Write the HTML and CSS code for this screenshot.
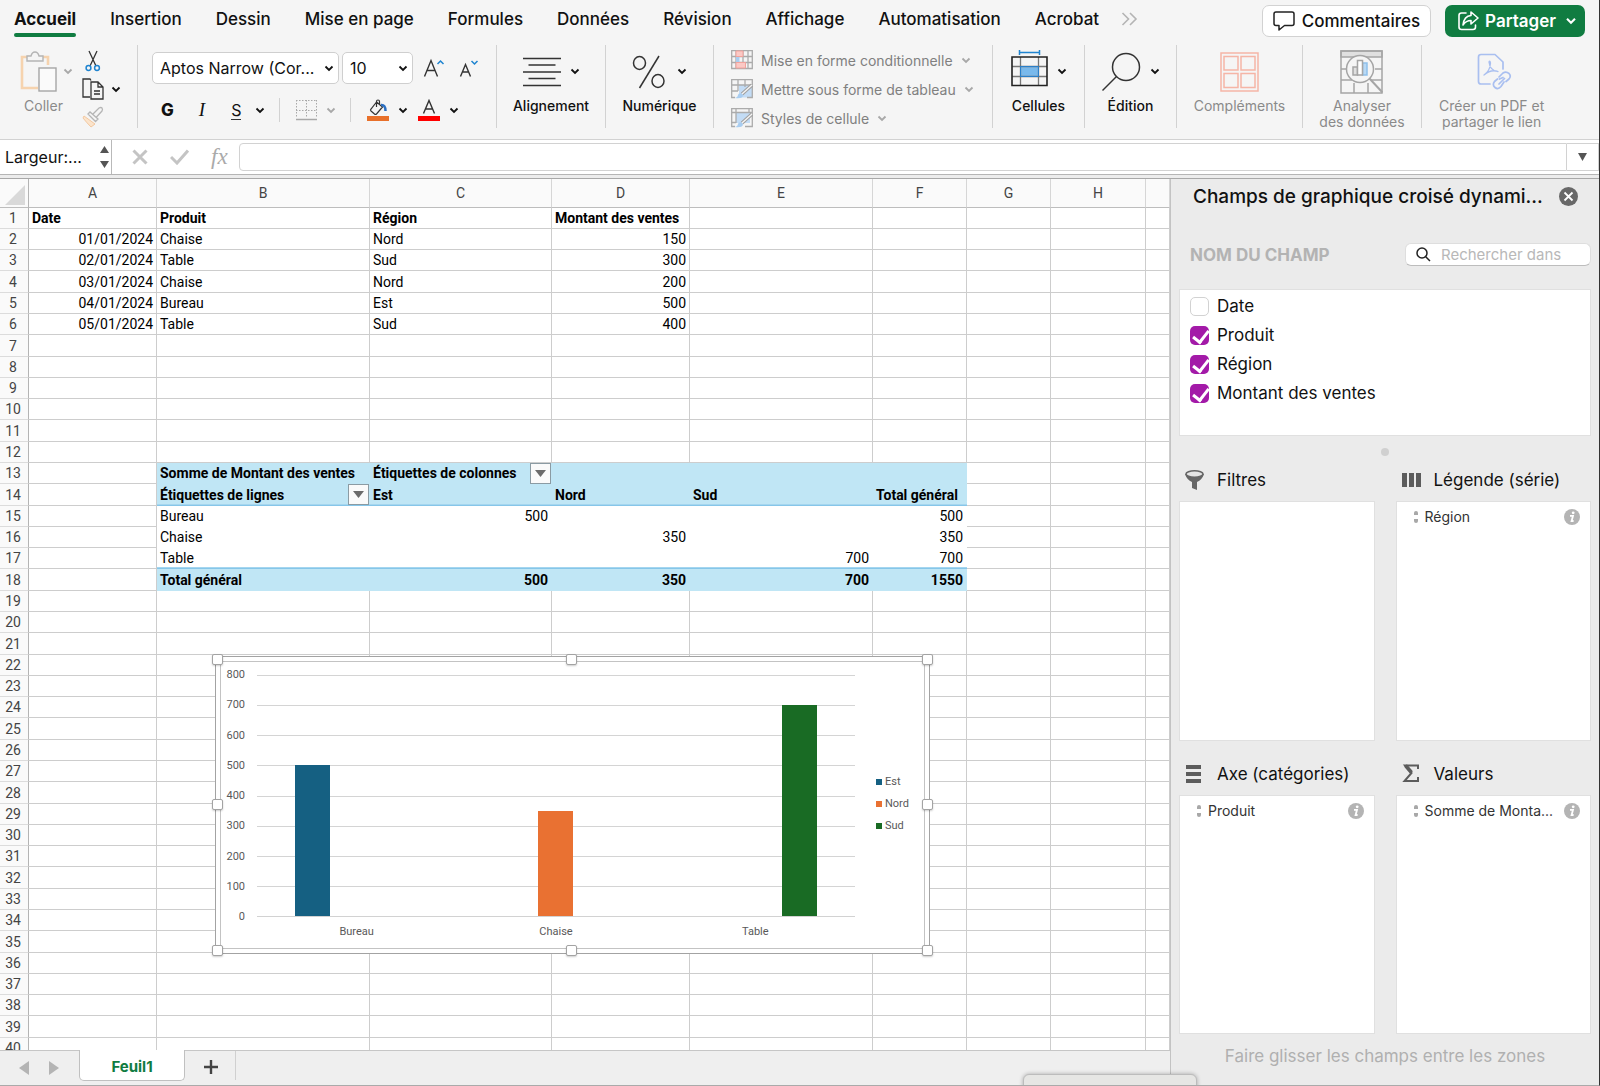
FILE: index.html
```html
<!DOCTYPE html>
<html lang="fr">
  <head>
    <meta charset="UTF-8" />
    <meta name="viewport" content="width=device-width, initial-scale=1.0" />
    <title>Feuil1</title>
    <link rel="stylesheet" href="styles.css" />
  </head>
  <body>
    <svg class="defs" aria-hidden="true">
      <symbol id="chevron" viewBox="0 0 10 7">
        <path d="M1.5 1.5 L5 5 L8.5 1.5" fill="none" stroke="currentColor" stroke-width="1.8" />
      </symbol>
      <symbol id="info" viewBox="0 0 16 16">
        <circle cx="8" cy="8" r="8" fill="#b4b4b4" />
        <circle cx="9.2" cy="3.8" r="1.4" fill="#fff" />
        <path d="M6 6.8 H9 L7.6 12 H9.6" fill="none" stroke="#fff" stroke-width="1.8" />
      </symbol>
    </svg>

    <div class="app">
      <header class="topbar">
        <nav class="tabs">
          <a class="tab active" href="#">Accueil</a>
          <a class="tab" href="#">Insertion</a>
          <a class="tab" href="#">Dessin</a>
          <a class="tab" href="#">Mise en page</a>
          <a class="tab" href="#">Formules</a>
          <a class="tab" href="#">Données</a>
          <a class="tab" href="#">Révision</a>
          <a class="tab" href="#">Affichage</a>
          <a class="tab" href="#">Automatisation</a>
          <a class="tab" href="#">Acrobat</a>
        </nav>
        <button class="more-tabs" aria-label="Plus d'onglets">
          <svg width="17" height="14" viewBox="0 0 17 14" fill="none" stroke="#b4b4b4" stroke-width="1.6">
            <path d="M1.5 1 L7.5 7 L1.5 13 M9 1 L15 7 L9 13" />
          </svg>
        </button>
        <div class="actions">
          <button class="btn-comments">
            <svg width="22" height="20" viewBox="0 0 22 20" fill="none" stroke="#222" stroke-width="1.5" stroke-linejoin="round">
              <path d="M3 1 H19 Q21 1 21 3 V12.500 Q21 14.500 19 14.500 H11.500 L6 19 V14.500 H3 Q1 14.500 1 12.500 V3 Q1 1 3 1 Z" />
            </svg>
            Commentaires
          </button>
          <button class="btn-share">
            <svg width="21" height="20" viewBox="0 0 21 20" fill="none" stroke="#fff" stroke-width="1.6" stroke-linejoin="round" stroke-linecap="round">
              <path d="M8 2 H3.5 Q1 2 1 4.500 V16 Q1 18.500 3.500 18.500 H15 Q17.500 18.500 17.500 16 V14" />
              <path d="M13 1 L20 7 L13 13 V9.500 Q8 9.500 5 14 Q6 5 13 4.500 Z" />
            </svg>
            Partager
            <svg class="chev"><use href="#chevron" /></svg>
          </button>
        </div>
      </header>

      <section class="ribbon">
        <div class="group group-clipboard">
          <button class="big muted">
            <span class="icon">
              <svg width="38" height="42" viewBox="0 0 38 42" fill="none">
                <path d="M9 6 H2 V37 H18" stroke="#f6d3ae" stroke-width="2.600" />
                <path d="M22 6 H28 V14" stroke="#f6d3ae" stroke-width="2.600" />
                <path d="M7 10 V5 H11 Q12 1 15 1 Q18 1 19 5 H23 V10 Z" fill="#f5f5f5" stroke="#b4b4b4" stroke-width="1.400" />
                <rect x="19" y="17" width="17" height="23" fill="#fafafa" stroke="#a5a5a5" stroke-width="1.400" />
              </svg>
              <svg class="chev"><use href="#chevron" /></svg>
            </span>
            <span class="label">Coller</span>
          </button>
          <div class="clip-tools">
            <button aria-label="Couper">
              <svg width="16" height="22" viewBox="0 0 16 22" fill="none">
                <path d="M4 1 L11 16 M12 1 L5 16" stroke="#333" stroke-width="1.300" />
                <circle cx="3.500" cy="18" r="2.400" stroke="#1f84d0" stroke-width="1.500" />
                <circle cx="12" cy="18" r="2.400" stroke="#1f84d0" stroke-width="1.500" />
              </svg>
            </button>
            <button aria-label="Copier">
              <svg width="24" height="22" viewBox="0 0 24 22" fill="none" stroke="#333" stroke-width="1.300">
                <path d="M9 19 H2 V1 H9 L10 2.500" />
                <path d="M10 4 H17 L22 9 V21 H10 Z M17 4 V9 H22 M13 13 H19 M13 16 H19" />
              </svg>
              <svg class="chev"><use href="#chevron" /></svg>
            </button>
            <button aria-label="Reproduire la mise en forme">
              <svg width="24" height="22" viewBox="0 0 24 22" fill="none">
                <path d="M3 10 L14 18 L10 21 Q6 17 2 12 Z" fill="#fbe4cc" stroke="#f3c8a0" />
                <path d="M7 8 L9 6 L17 13 L14.500 15.500 Z M12 8 L18 2 Q20 1 21 2 Q22 3.500 21 5 L15.500 11" stroke="#b5b5b5" stroke-width="1.300" />
              </svg>
            </button>
          </div>
        </div>

        <div class="group group-font">
          <div class="font-row">
            <span class="select select-font">
              <select aria-label="Police">
                <option>Aptos Narrow (Cor...</option>
              </select>
              <svg class="chev"><use href="#chevron" /></svg>
            </span>
            <span class="select select-size">
              <select aria-label="Taille de police">
                <option>10</option>
              </select>
              <svg class="chev"><use href="#chevron" /></svg>
            </span>
            <button class="grow" aria-label="Augmenter la taille">
              <svg width="22" height="20" viewBox="0 0 22 20" fill="none">
                <path d="M1.500 18.500 L8 2.500 L14.500 18.500 M4 12.500 H12" stroke="#333" stroke-width="1.400" />
                <path d="M14.500 6 L17.500 3 L20.500 6" stroke="#1f84d0" stroke-width="1.500" />
              </svg>
            </button>
            <button class="shrink" aria-label="Réduire la taille">
              <svg width="20" height="20" viewBox="0 0 20 20" fill="none">
                <path d="M1.500 18.500 L6.500 6.500 L11.500 18.500 M3.500 14 H9.500" stroke="#333" stroke-width="1.400" />
                <path d="M12.500 3 L15.500 6 L18.500 3" stroke="#1f84d0" stroke-width="1.500" />
              </svg>
            </button>
          </div>
          <div class="font-row font-styles">
            <button class="bold">G</button>
            <button class="italic">I</button>
            <button class="underline">S</button>
            <svg class="chev"><use href="#chevron" /></svg>
            <span class="sep"></span>
            <button class="muted" aria-label="Bordures">
              <svg width="21" height="21" viewBox="0 0 21 21" fill="none" stroke="#a8a8a8">
                <path d="M0 .5 H21 M0 10.500 H21 M.5 0 V18 M10.500 0 V18 M20.500 0 V18" stroke-dasharray="1.500 1.500" />
                <path d="M0 19.500 H21" stroke-width="1.500" />
              </svg>
              <svg class="chev"><use href="#chevron" /></svg>
            </button>
            <span class="sep"></span>
            <button aria-label="Couleur de remplissage">
              <svg width="22" height="22" viewBox="0 0 22 22" fill="none">
                <path d="M9.500 3 L4 10 Q3 11 4 12 L7.500 15 Q8.500 15.800 9.500 15 L15.500 8 L9.500 3 M9.500 8 V2.500 Q9.500 1 11 1 Q12.500 1 12.500 2.500 V5.500" stroke="#333" stroke-width="1.200" />
                <path d="M14 6 Q18.500 5.500 18.500 12" stroke="#2b6fc2" stroke-width="2.500" />
                <rect y="17" width="22" height="5" fill="#e8702a" />
              </svg>
              <svg class="chev"><use href="#chevron" /></svg>
            </button>
            <button class="font-color" aria-label="Couleur de police">
              <svg width="22" height="22" viewBox="0 0 22 22" fill="none">
                <path d="M5.500 14.500 L11 1.500 L16.500 14.500 M7.500 10 H14.500" stroke="#333" stroke-width="1.400" />
                <rect y="17" width="22" height="5" fill="#f00" />
              </svg>
              <svg class="chev"><use href="#chevron" /></svg>
            </button>
          </div>
        </div>

        <div class="group group-align">
          <button class="big">
            <span class="icon">
              <svg width="38" height="30" viewBox="0 0 38 30" stroke="#333" stroke-width="1.500">
                <path d="M0 1.500 H38 M5.500 8 H32.500 M0 15 H38 M5.500 21.500 H32.500 M0 28.500 H38" />
              </svg>
              <svg class="chev"><use href="#chevron" /></svg>
            </span>
            <span class="label">Alignement</span>
          </button>
        </div>

        <div class="group group-number">
          <button class="big">
            <span class="icon">
              <svg width="34" height="34" viewBox="0 0 34 34" fill="none" stroke="#333" stroke-width="1.500">
                <ellipse cx="7.500" cy="8" rx="6" ry="6.500" />
                <ellipse cx="26" cy="26" rx="6" ry="6.500" />
                <path d="M27 1 L7.500 33" />
              </svg>
              <svg class="chev"><use href="#chevron" /></svg>
            </span>
            <span class="label">Numérique</span>
          </button>
        </div>

        <div class="group group-styles">
          <button class="style-row">
            <svg width="22" height="20" viewBox="0 0 22 20" fill="none">
              <path d="M.7 .7 H21.300 V18.500 H.7 Z M.7 6.500 H21.300 M.7 12.500 H21.300 M5 .7 V18.500 M12 .7 V18.500 M17 .7 V18.500" stroke="#ababab" stroke-width="1.300" />
              <path d="M5 1 H12 V6.500 H5 Z M5 12.500 H14.500 V18 H5 Z" fill="#fbc9c5" stroke="#f2a39d" />
              <path d="M5 7 H8.500 V12 H5 Z" fill="#a9cdf0" />
            </svg>
            Mise en forme conditionnelle
            <svg class="chev"><use href="#chevron" /></svg>
          </button>
          <button class="style-row">
            <svg width="22" height="20" viewBox="0 0 22 20" fill="none">
              <path d="M8 6 H21 V18.500 H8 Z" fill="#c3dcf5" />
              <path d="M4 18.500 H.7 V.7 H21.300 V18.500 H16 M.7 6 H21.300 M.7 12 H7 M7 .7 V12 M14 .7 V8" stroke="#ababab" stroke-width="1.300" />
              <path d="M21 6 L11 15" stroke="#a0a0a0" stroke-width="3.600" />
              <path d="M21 6 L11 15" stroke="#f5f5f5" stroke-width="1.400" />
              <path d="M4 19 Q7 18 7.500 15 Q10 13 12 16 Q12 20 4 19 Z" fill="#a9cdf0" />
            </svg>
            Mettre sous forme de tableau
            <svg class="chev"><use href="#chevron" /></svg>
          </button>
          <button class="style-row">
            <svg width="22" height="20" viewBox="0 0 22 20" fill="none">
              <path d="M5 4 H19 V15 H5 Z" fill="#c3dcf5" />
              <path d="M4 18.500 H.7 V.7 H21.300 V18.500 H14 M.7 4.500 H21.300 M5 .7 V15 M18 .7 V5 M0 14.500 H5" stroke="#ababab" stroke-width="1.300" />
              <path d="M21 6 L11 15" stroke="#a0a0a0" stroke-width="3.600" />
              <path d="M21 6 L11 15" stroke="#f5f5f5" stroke-width="1.400" />
              <path d="M4 19 Q7 18 7.500 15 Q10 13 12 16 Q12 20 4 19 Z" fill="#a9cdf0" />
            </svg>
            Styles de cellule
            <svg class="chev"><use href="#chevron" /></svg>
          </button>
        </div>

        <div class="group group-small">
          <button class="big">
            <span class="icon">
              <svg width="37" height="44" viewBox="0 0 37 44" fill="none">
                <path d="M8.500 0 V5 M28.500 0 V5 M8.500 2.500 H28.500" stroke="#1f84d0" stroke-width="1.500" />
                <rect x="9.500" y="16.500" width="18" height="10" fill="#79b9ec" />
                <path d="M1 16.500 H36 M1 26.500 H36 M9.500 7 V35.500 M27.500 7 V35.500" stroke="#777" stroke-width="1.300" />
                <path d="M1 7 H36 V35.500 H1 Z" stroke="#222" stroke-width="1.600" />
                <rect x="9.500" y="16.500" width="18" height="10" stroke="#2a7fc9" />
              </svg>
              <svg class="chev"><use href="#chevron" /></svg>
            </span>
            <span class="label">Cellules</span>
          </button>
        </div>

        <div class="group group-small">
          <button class="big">
            <span class="icon">
              <svg width="40" height="40" viewBox="0 0 40 40" fill="none" stroke="#333" stroke-width="1.500">
                <circle cx="25" cy="15" r="13.500" />
                <path d="M15.500 24.500 L1.500 38.500" />
              </svg>
              <svg class="chev"><use href="#chevron" /></svg>
            </span>
            <span class="label">Édition</span>
          </button>
        </div>

        <div class="group group-addins">
          <button class="big muted">
            <span class="icon">
              <svg width="39" height="40" viewBox="0 0 39 40" fill="none" stroke="#f5b5a6" stroke-width="1.500">
                <path d="M1 1 H38 V39 H1 Z M4 4.500 H18 V18 H4 Z M21 4.500 H35 V18 H21 Z M4 21.500 H18 V35.500 H4 Z M21 21.500 H35 V35.500 H21 Z" />
              </svg>
            </span>
            <span class="label">Compléments</span>
          </button>
        </div>

        <div class="group group-analyse">
          <button class="big muted">
            <span class="icon">
              <svg width="43" height="44" viewBox="0 0 43 44" fill="none" stroke="#a5a5a5" stroke-width="1.500">
                <path d="M1 1 H42 V7 H1 Z" fill="#e0e0e0" />
                <path d="M1 1 H42 V43 H1 Z M1 19 H6 M35 19 H42 M1 30 H12 M31 30 H42 M14 33 V43 M28 33 V43" />
                <circle cx="20" cy="19" r="13.500" fill="#f5f5f5" />
                <path d="M13 17 H17.500 V25 H13 Z" fill="#e0e0e0" />
                <path d="M22.500 13 H27 V25 H22.500 Z" fill="#b8d9f5" stroke="#8fc0ea" />
                <path d="M17.500 10.500 H22.500 V25 H17.500 Z" fill="#fff" />
                <path d="M29.500 28.500 L42.500 42.500" stroke-width="2" />
              </svg>
            </span>
            <span class="label">Analyser<br />des données</span>
          </button>
        </div>

        <div class="group group-pdf">
          <button class="big muted">
            <span class="icon">
              <svg width="36" height="38" viewBox="0 0 36 38" fill="none" stroke="#a9bff0" stroke-width="1.700" stroke-linecap="round" stroke-linejoin="round">
                <path d="M13 31 H4 Q1.500 31 1.500 28.500 V4 Q1.500 1.500 4 1.500 H18 L26 9 V16" />
                <path d="M7 22 Q13 18 13.500 10 Q13 7 12 9 Q13 18 21 18.500 Q14 16 7 22 Z" stroke-width="1.300" />
                <path d="M22 24 L26 20 Q29 18 32 20.500 Q34.500 23 32 26 L29 28.500 M26 24.500 L22.500 26 M27 29 L24 33.500 Q21 37 18 34.500 Q15 32 17.500 28.500 L20.500 26 M22 31 L27.500 25.500" />
              </svg>
            </span>
            <span class="label">Créer un PDF et<br />partager le lien</span>
          </button>
        </div>
      </section>

      <div class="formula-bar">
        <div class="name-box">
          <input type="text" value="Largeur:..." aria-label="Zone Nom" />
          <svg width="9" height="22" viewBox="0 0 9 22" fill="#555">
            <path d="M0 7 L4.500 0 L9 7 Z M0 15 L4.500 22 L9 15 Z" />
          </svg>
        </div>
        <button aria-label="Annuler">
          <svg width="16" height="16" viewBox="0 0 16 16" stroke="#c4c4c4" stroke-width="3">
            <path d="M1.500 1.500 L14.500 14.500 M14.500 1.500 L1.500 14.500" />
          </svg>
        </button>
        <button aria-label="Valider">
          <svg width="19" height="16" viewBox="0 0 19 16" fill="none" stroke="#c4c4c4" stroke-width="3">
            <path d="M1 8 L7 14 L18 1.500" />
          </svg>
        </button>
        <button class="fx" aria-label="Insérer une fonction">fx</button>
        <input class="formula" type="text" aria-label="Barre de formule" />
        <button class="expand" aria-label="Développer">
          <svg width="9" height="8" viewBox="0 0 9 8" fill="#555"><path d="M0 0 H9 L4.500 8 Z" /></svg>
        </button>
      </div>

      <div class="workspace">
        <main class="workbook">
          <div class="sheet">
            <table class="grid">
              <colgroup>
                <col class="col-num" /><col class="col-a" /><col class="col-b" /><col class="col-c" /><col class="col-d" />
                <col class="col-e" /><col class="col-f" /><col class="col-g" /><col class="col-h" /><col />
              </colgroup>
              <thead>
                <tr>
                  <th class="corner">
                    <svg width="20" height="20" viewBox="0 0 20 20" fill="#d9d9d9"><path d="M20 0 V20 H0 Z" /></svg>
                  </th>
                  <th>A</th><th>B</th><th>C</th><th>D</th><th>E</th><th>F</th><th>G</th><th>H</th><th></th>
                </tr>
              </thead>
              <tbody id="rows"></tbody>
            </table>

            <figure class="chart">
              <div class="y-axis">
                <span>800</span><span>700</span><span>600</span><span>500</span><span>400</span><span>300</span><span>200</span><span>100</span><span>0</span>
              </div>
              <div class="plot">
                <div class="lines"><i></i><i></i><i></i><i></i><i></i><i></i><i></i><i></i></div>
                <div class="bars">
                  <div class="cluster">
                    <div class="bar est" style="height: 62.5%"></div>
                    <div class="bar"></div>
                    <div class="bar"></div>
                  </div>
                  <div class="cluster">
                    <div class="bar"></div>
                    <div class="bar nord" style="height: 43.75%"></div>
                    <div class="bar"></div>
                  </div>
                  <div class="cluster">
                    <div class="bar"></div>
                    <div class="bar"></div>
                    <div class="bar sud" style="height: 87.5%"></div>
                  </div>
                </div>
              </div>
              <ul class="legend">
                <li><i class="est"></i>Est</li>
                <li><i class="nord"></i>Nord</li>
                <li><i class="sud"></i>Sud</li>
              </ul>
              <div class="x-axis"><span>Bureau</span><span>Chaise</span><span>Table</span></div>
              <span class="handle top left"></span>
              <span class="handle top center"></span>
              <span class="handle top right"></span>
              <span class="handle middle left"></span>
              <span class="handle middle right"></span>
              <span class="handle bottom left"></span>
              <span class="handle bottom center"></span>
              <span class="handle bottom right"></span>
            </figure>
          </div>

          <footer class="sheet-tabs">
            <button aria-label="Feuille précédente">
              <svg width="10" height="14" viewBox="0 0 10 14" fill="#b4b4b4"><path d="M10 0 V14 L0 7 Z" /></svg>
            </button>
            <button aria-label="Feuille suivante">
              <svg width="10" height="14" viewBox="0 0 10 14" fill="#b4b4b4"><path d="M0 0 V14 L10 7 Z" /></svg>
            </button>
            <button class="sheet-tab">Feuil1</button>
            <button class="add-sheet" aria-label="Ajouter une feuille">
              <svg width="14" height="14" viewBox="0 0 14 14" stroke="#444" stroke-width="2.400"><path d="M7 0 V14 M0 7 H14" /></svg>
            </button>
          </footer>
        </main>

        <aside class="panel">
          <div class="panel-title">
            <h2>Champs de graphique croisé dynami...</h2>
            <button aria-label="Fermer">
              <svg width="19" height="19" viewBox="0 0 19 19">
                <circle cx="9.500" cy="9.500" r="9.500" fill="#686868" />
                <path d="M5.500 5.500 L13.500 13.500 M13.500 5.500 L5.500 13.500" stroke="#fff" stroke-width="1.800" />
              </svg>
            </button>
          </div>

          <div class="field-head">
            <h3>NOM DU CHAMP</h3>
            <label class="search">
              <svg width="15" height="15" viewBox="0 0 15 15" fill="none" stroke="#222" stroke-width="1.500">
                <circle cx="6" cy="6" r="5" />
                <path d="M9.500 9.500 L14 14" />
              </svg>
              <input type="text" placeholder="Rechercher dans" aria-label="Rechercher dans les champs" />
            </label>
          </div>

          <div class="fields">
            <label><input type="checkbox" />Date</label>
            <label><input type="checkbox" checked />Produit</label>
            <label><input type="checkbox" checked />Région</label>
            <label><input type="checkbox" checked />Montant des ventes</label>
          </div>
          <div class="splitter"></div>

          <div class="zones">
            <section class="zone">
              <h4>
                <svg width="19" height="20" viewBox="0 0 19 20">
                  <path d="M0 4 Q2 10 7 12 V18 L12 20 V12 Q17 10 19 4 Z" fill="#666" />
                  <ellipse cx="9.500" cy="4" rx="8.500" ry="3.200" fill="#e4e4e4" stroke="#666" stroke-width="1.600" />
                </svg>
                Filtres
              </h4>
              <div class="drop"></div>
            </section>
            <section class="zone">
              <h4>
                <svg width="19" height="14" viewBox="0 0 19 14" fill="#5c5c5c"><path d="M0 0 H5 V14 H0 Z M7 0 H12 V14 H7 Z M14 0 H19 V14 H14 Z" /></svg>
                Légende (série)
              </h4>
              <div class="drop">
                <div class="item"><i class="grip"></i><span>Région</span><svg class="info"><use href="#info" /></svg></div>
              </div>
            </section>
            <section class="zone">
              <h4>
                <svg width="19" height="18" viewBox="0 0 19 18" fill="#5c5c5c"><path d="M1 0 H16 V4 H1 Z M1 7 H16 V11 H1 Z M1 14 H16 V18 H1 Z" /></svg>
                Axe (catégories)
              </h4>
              <div class="drop">
                <div class="item"><i class="grip"></i><span>Produit</span><svg class="info"><use href="#info" /></svg></div>
              </div>
            </section>
            <section class="zone">
              <h4>
                <svg width="19" height="19" viewBox="0 0 19 19" fill="none" stroke="#5c5c5c">
                  <path d="M16 5 V1.500 H3 L9.500 9 L2.500 17 H16 V13" stroke-width="2" />
                  <path d="M3.500 1.500 L9.500 8.500" stroke-width="3.600" />
                </svg>
                Valeurs
              </h4>
              <div class="drop">
                <div class="item"><i class="grip"></i><span>Somme de Monta...</span><svg class="info"><use href="#info" /></svg></div>
              </div>
            </section>
          </div>
          <p class="hint">Faire glisser les champs entre les zones</p>
        </aside>
      </div>
      <div class="popup"></div>
    </div>

    <script src="script.js"></script>
  </body>
</html>
```

FILE: styles.css
```css
* {
  box-sizing: border-box;
}
body {
  margin: 0;
  font-family: Inter, "Liberation Sans", sans-serif;
  color: #111;
  background: #f5f5f5;
}
button {
  display: flex;
  align-items: center;
  padding: 0;
  border: none;
  background: none;
  font: inherit;
  color: inherit;
}
input,
select {
  font: inherit;
  color: inherit;
}
svg {
  flex: none;
}
.defs {
  position: absolute;
  width: 0;
  height: 0;
}
.app {
  position: relative;
  display: flex;
  flex-direction: column;
  height: 100vh;
  overflow: hidden;
  border-right: 1px solid #333;
  border-bottom: 1px solid #aaa;
}
.chev {
  width: 10px;
  height: 7px;
}

/* Tabs */
.topbar {
  display: flex;
  height: 42px;
  padding: 0 14px;
}
.tabs {
  display: flex;
  gap: 34px;
}
.tab {
  padding-top: 9px;
  font-size: 17px;
  font-weight: 500;
  line-height: 21px;
  color: #111;
  text-decoration: none;
  white-space: nowrap;
}
.tab.active {
  font-weight: 700;
}
.tab.active::after {
  content: "";
  display: block;
  height: 4px;
  margin-top: 3px;
  border-radius: 2px;
  background: #107c41;
}
.more-tabs {
  height: 38px;
  margin-left: 22px;
}
.actions {
  display: flex;
  gap: 14px;
  margin-left: auto;
  padding-top: 5px;
}
.btn-comments,
.btn-share {
  height: 32px;
  padding: 0 10px;
  border-radius: 7px;
  font-size: 17px;
  font-weight: 500;
}
.btn-comments {
  gap: 7px;
  border: 1px solid #d2d2d2;
  background: #fff;
}
.btn-share {
  gap: 6px;
  padding: 0 8px 0 13px;
  background: #107c41;
  color: #fff;
  font-weight: 600;
}
.btn-share .chev {
  width: 12px;
  height: 8px;
  margin-left: 3px;
}

/* Ribbon */
.ribbon {
  display: flex;
  padding: 3px 0 11px;
  border-bottom: 1px solid #d2d2d2;
  font-size: 14px;
}
.group {
  display: flex;
  justify-content: center;
  height: 83px;
  border-right: 1px solid #d2d2d2;
}
.group:last-child {
  border-right: none;
}
.big {
  flex-direction: column;
}
.icon {
  display: flex;
  flex: none;
  align-items: center;
  gap: 9px;
  height: 53px;
}
.label {
  line-height: 16px;
  text-align: center;
  font-weight: 500;
  white-space: nowrap;
}
.muted {
  color: #8a8a8a;
}
.muted .label {
  font-weight: 400;
}
.muted .chev,
.style-row .chev {
  color: #a8a8a8;
}
.group-clipboard {
  width: 138px;
  gap: 8px;
  padding-left: 4px;
}
.group-clipboard .icon {
  gap: 5px;
}
.group-clipboard .label {
  padding-right: 6px;
}
.clip-tools {
  display: flex;
  flex-direction: column;
  gap: 6px;
  padding-top: 5px;
}
.clip-tools button {
  gap: 6px;
}
.clip-tools button:first-child {
  padding-left: 4px;
}
.group-font {
  flex-direction: column;
  justify-content: flex-start;
  gap: 14px;
  width: 359px;
  padding: 7px 0 0 14px;
}
.font-row {
  display: flex;
  align-items: center;
  height: 32px;
}
.select {
  position: relative;
  margin-right: 3px;
}
.select select {
  display: block;
  width: 100%;
  height: 32px;
  padding: 0 7px;
  border: 1px solid #cfcfcf;
  border-radius: 5px;
  background: #fff;
  font-size: 16px;
  appearance: none;
}
.select .chev {
  position: absolute;
  top: 13px;
  right: 5px;
}
.select-font {
  width: 187px;
}
.select-size {
  width: 71px;
}
.grow {
  margin: 0 14px 0 7px;
}
.font-styles {
  height: 24px;
  font-size: 17px;
}
.font-styles button {
  gap: 9px;
}
.font-styles .bold {
  padding: 0 25px 0 9px;
  font-weight: 800;
}
.italic {
  padding-right: 26px;
  font-family: "Liberation Serif", serif;
  font-size: 19px;
  font-style: italic;
}
.font-styles .underline {
  margin-right: 14px;
  border-bottom: 1px solid #333;
  font-size: 16px;
  line-height: 18px;
}
.sep {
  height: 24px;
  margin: 0 16px 0 14px;
  border-left: 1px solid #d2d2d2;
}
.font-color {
  margin-left: 10px;
}
.group-align {
  width: 109px;
}
.group-number {
  width: 108px;
}
.group-number .icon {
  gap: 11px;
}
.group-styles {
  flex-direction: column;
  justify-content: space-between;
  align-items: flex-start;
  width: 279px;
  padding: 5px 0 0 17px;
}
.style-row {
  gap: 8px;
  height: 20px;
  color: #808080;
  white-space: nowrap;
}
.group-small {
  width: 92px;
}
.group-addins {
  width: 126px;
}
.group-analyse {
  width: 119px;
}
.group-pdf {
  padding-left: 17px;
}
.group-pdf .icon {
  padding-left: 7px;
}

/* Formula bar */
.formula-bar {
  display: flex;
  align-items: center;
  height: 39px;
  padding-bottom: 4px;
  border-bottom: 1px solid #a8a8a8;
  background: linear-gradient(#fff 34px, #b5b5b5 34px, #b5b5b5 35px, #ececec 35px);
}
.name-box {
  display: flex;
  align-items: center;
  width: 112px;
  height: 34px;
  margin-right: 20px;
  padding: 0 2px 0 5px;
  border-right: 1px solid #b9b9b9;
}
.name-box input {
  flex: 1;
  min-width: 0;
  padding: 0;
  border: none;
  outline: none;
  font-size: 16px;
}
.formula-bar button {
  margin-right: 22px;
}
.formula-bar .fx {
  margin-right: 11px;
  font-family: "Liberation Serif", serif;
  font-size: 23px;
  font-style: italic;
  line-height: 24px;
  color: #aaa;
}
.formula {
  flex: 1;
  height: 28px;
  border: 1px solid #d2d2d2;
  border-radius: 4px 0 0 4px;
  background: #fff;
}
.formula-bar .expand {
  justify-content: center;
  width: 32px;
  height: 28px;
  margin: 0;
  border: 1px solid #d2d2d2;
  border-left: none;
  background: #fff;
}

/* Sheet */
.workspace {
  display: flex;
  flex: 1;
  min-height: 0;
}
.workbook {
  display: flex;
  flex: 1;
  flex-direction: column;
  min-width: 0;
}
.sheet {
  position: relative;
  flex: 1;
  min-height: 0;
  overflow: hidden;
  background: #fff;
}
.grid {
  width: 100%;
  table-layout: fixed;
  border-collapse: separate;
  border-spacing: 0;
  font-family: Roboto, "Liberation Sans", sans-serif;
  font-size: 14px;
}
.col-num {
  width: 29px;
}
.col-a {
  width: 128px;
}
.col-b {
  width: 213px;
}
.col-c {
  width: 182px;
}
.col-d {
  width: 138px;
}
.col-e {
  width: 183px;
}
.col-f {
  width: 94px;
}
.col-g {
  width: 84px;
}
.col-h {
  width: 95px;
}
.grid th {
  height: 29px;
  padding: 0;
  border-right: 1px solid #d6d6d6;
  border-bottom: 1px solid #bdbdbd;
  background: #fafafa;
  font-weight: 400;
  color: #444;
}
.grid tbody th {
  padding-right: 2px;
  border-right-color: #b4b4b4;
  border-bottom-color: #dcdcdc;
}
.grid .corner {
  padding: 4px 3px 0 5px;
  border-right-color: #b4b4b4;
}
.corner svg {
  display: block;
}
.grid td {
  position: relative;
  padding: 0 3px;
  border-right: 1px solid #cdcdcd;
  border-bottom: 1px solid #cdcdcd;
  color: #000;
  white-space: nowrap;
}
.grid tbody tr > * {
  height: 21px;
  padding-top: 1px;
  line-height: 19px;
  vertical-align: bottom;
}
/* zoomed rows come out at 21.3px on average */
.grid tbody tr:nth-child(7n) > *,
.grid tbody tr:nth-child(7n + 4) > * {
  height: 22px;
}
.grid .num {
  text-align: right;
}
.grid .strong {
  font-weight: 700;
}
.grid .pivot {
  padding-right: 4px;
  border-right: none;
  border-bottom-color: transparent;
}
.grid .pivot.head {
  border-bottom-color: #c0e6f5;
  background: #c0e6f5;
}
.grid .pivot.rule {
  border-bottom-color: #86c6e9;
  box-shadow: inset 0 -1px #a5d6ef;
}
.filter {
  position: absolute;
  top: 0;
  right: 1px;
  justify-content: center;
  width: 21px;
  height: 21px;
  border: 1px solid #8b9ba3;
  background: #fafafa;
}

/* Chart */
.chart {
  position: absolute;
  top: 477px;
  left: 215px;
  display: grid;
  grid-template: 242px 24px / 25px 598px auto;
  column-gap: 12px;
  width: 715px;
  height: 298px;
  margin: 0;
  padding: 18px 0 0 4px;
  border: 1px solid #a3a3a3;
  background: #fff;
  box-shadow: inset 0 0 0 4px #fff, inset 0 0 0 5px #c3c3c3;
  font-family: Roboto, "Liberation Sans", sans-serif;
  font-size: 11px;
  color: #595959;
}
.y-axis {
  display: flex;
  flex-direction: column;
  justify-content: space-between;
  margin: -7px 0;
  line-height: 14px;
  text-align: right;
}
.plot {
  display: grid;
  border-bottom: 1px solid #d2d2d2;
}
.lines,
.bars {
  display: flex;
  grid-area: 1 / 1;
}
.lines {
  flex-direction: column;
}
.lines i {
  flex: 1;
  border-top: 1px solid #d4d4d4;
}
.cluster {
  display: flex;
  flex: 1;
  align-items: flex-end;
  justify-content: center;
  gap: 9px;
}
.bar {
  width: 35px;
}
.est {
  background: #156082;
}
.nord {
  background: #e97132;
}
.sud {
  background: #196b24;
}
.legend {
  display: flex;
  flex-direction: column;
  gap: 8px;
  margin: 100px 0 0 9px;
  padding: 0;
  line-height: 14px;
  list-style: none;
}
.legend li {
  display: flex;
  align-items: center;
  gap: 3px;
}
.legend i {
  width: 6px;
  height: 6px;
}
.x-axis {
  display: flex;
  grid-column: 2;
  padding-top: 8px;
  line-height: 14px;
  text-align: center;
}
.x-axis span {
  flex: 1;
}
.handle {
  position: absolute;
  width: 11px;
  height: 11px;
  border: 1px solid #a3a3a3;
  border-radius: 2px;
  background: #fff;
  box-shadow: 0 1px 2px rgba(0, 0, 0, 0.2);
}
.handle.top {
  top: -3px;
}
.handle.middle {
  top: 142px;
}
.handle.bottom {
  bottom: -3px;
}
.handle.left {
  left: -4px;
}
.handle.center {
  left: 350px;
}
.handle.right {
  right: -4px;
}

/* Sheet tabs */
.sheet-tabs {
  display: flex;
  align-items: center;
  height: 35px;
  padding-left: 19px;
  border-top: 1px solid #c6c6c6;
  background: #efefef;
}
.sheet-tabs button {
  margin-right: 20px;
}
.sheet-tabs .sheet-tab {
  align-self: flex-start;
  justify-content: center;
  width: 106px;
  height: 31px;
  margin: -1px 19px 0 0;
  padding-top: 2px;
  border: 1px solid #c0c0c0;
  border-top: none;
  border-radius: 0 0 5px 5px;
  background: #fff;
  font-size: 15px;
  font-weight: 700;
  color: #107c41;
}
.sheet-tabs .add-sheet {
  align-self: flex-start;
  height: 29px;
  margin: 0;
  padding: 3px 17px 0 0;
  border-right: 1px solid #d0d0d0;
}

/* Field panel */
.panel {
  display: flex;
  flex-direction: column;
  width: 429px;
  padding: 0 8px;
  border-left: 1px solid #c3c3c3;
  background: #ebebeb;
}
.panel h2,
.panel h3,
.panel h4,
.panel p {
  margin: 0;
}
.panel-title {
  display: flex;
  align-items: center;
  justify-content: space-between;
  height: 35px;
  padding: 0 13px 0 14px;
}
.panel h2 {
  font-size: 19px;
  font-weight: 500;
  white-space: nowrap;
}
.field-head {
  display: flex;
  align-items: center;
  justify-content: space-between;
  margin-top: 29px;
  padding-left: 11px;
}
.panel h3 {
  font-size: 17px;
  font-weight: 700;
  line-height: 20px;
  color: #b3b3b3;
}
.search {
  display: flex;
  align-items: center;
  gap: 10px;
  width: 186px;
  height: 23px;
  padding: 0 10px;
  border: 1px solid #dedede;
  border-bottom-color: #bdbdbd;
  border-radius: 6px;
  background: #fff;
}
.search input {
  flex: 1;
  min-width: 0;
  padding: 0;
  border: none;
  outline: none;
  background: none;
  font-size: 15px;
}
.search input::placeholder {
  color: #b8b8b8;
}
.fields {
  display: flex;
  flex-direction: column;
  gap: 9px;
  min-height: 147px;
  margin-top: 23px;
  padding: 6px 10px;
  border: 1px solid #e0e0e0;
  background: #fff;
}
.fields label {
  display: flex;
  align-items: center;
  gap: 8px;
  font-size: 17px;
  line-height: 20px;
}
.fields input {
  width: 19px;
  height: 19px;
  margin: 0;
  border: 1px solid #d2d2d2;
  border-radius: 5px;
  background: #fff;
  appearance: none;
}
.fields input:checked {
  border: none;
  background: #a31aa8;
}
.fields input:checked::after {
  content: "";
  display: block;
  width: 7px;
  height: 13px;
  margin: 1px 0 0 6px;
  border: solid #fff;
  border-width: 0 3px 3px 0;
  transform: rotate(38deg);
}
.splitter {
  display: flex;
  align-items: flex-end;
  justify-content: center;
  height: 23px;
  padding-bottom: 3px;
}
.splitter::after {
  content: "";
  width: 8px;
  height: 8px;
  border-radius: 50%;
  background: #d0d0d0;
}
.zones {
  display: grid;
  flex: 1;
  grid-template: 1fr 1fr / 1fr 1fr;
  gap: 12px 21px;
}
.zone {
  display: flex;
  flex-direction: column;
}
.zone h4 {
  display: flex;
  align-items: center;
  gap: 13px;
  height: 42px;
  padding-left: 6px;
  font-size: 17px;
  font-weight: 400;
}
.drop {
  flex: 1;
  border: 1px solid #e0e0e0;
  background: #fff;
}
.item {
  display: flex;
  align-items: center;
  gap: 7px;
  padding: 6px 10px 0 17px;
  font-size: 14px;
  line-height: 18px;
  color: #333;
}
.item span {
  flex: 1;
  white-space: nowrap;
}
.grip {
  width: 4px;
  height: 12px;
  border-radius: 2px;
  background: linear-gradient(#a8a8a8 4px, transparent 4px, transparent 8px, #a8a8a8 8px);
}
.info {
  width: 16px;
  height: 16px;
}
.panel .hint {
  padding-bottom: 6px;
  font-size: 17px;
  line-height: 45px;
  text-align: center;
  color: #b0b0b0;
}

/* Top edge of the window that shows from below */
.popup {
  position: absolute;
  bottom: -10px;
  left: 1023px;
  width: 174px;
  height: 21px;
  border: 1px solid #bcbcbc;
  border-radius: 6px;
  background: #e6e6e4;
  box-shadow: 0 0 4px rgba(0, 0, 0, 0.3);
}
```

FILE: script.js
```js
const ROW_COUNT = 40;
const COLUMNS = ["A", "B", "C", "D", "E", "F", "G", "H", ""];

const cells = {
  1: { A: "Date", B: "Produit", C: "Région", D: "Montant des ventes" },
  2: { A: "01/01/2024", B: "Chaise", C: "Nord", D: 150 },
  3: { A: "02/01/2024", B: "Table", C: "Sud", D: 300 },
  4: { A: "03/01/2024", B: "Chaise", C: "Nord", D: 200 },
  5: { A: "04/01/2024", B: "Bureau", C: "Est", D: 500 },
  6: { A: "05/01/2024", B: "Table", C: "Sud", D: 400 },
  13: { B: "Somme de Montant des ventes", C: "Étiquettes de colonnes" },
  14: { B: "Étiquettes de lignes", C: "Est", D: "Nord", E: "Sud", F: "Total général" },
  15: { B: "Bureau", C: 500, F: 500 },
  16: { B: "Chaise", D: 350, F: 350 },
  17: { B: "Table", E: 700, F: 700 },
  18: { B: "Total général", C: 500, D: 350, E: 700, F: 1550 },
};

const filterCells = ["C13", "B14"];
const boldRows = [1, 13, 14, 18];

function addFilter(td) {
  const button = document.createElement("button");
  button.className = "filter";
  button.setAttribute("aria-label", "Filtrer");
  button.innerHTML =
    '<svg width="11" height="7" viewBox="0 0 11 7" fill="#6b6b6b"><path d="M0 0 H11 L5.5 7 Z" /></svg>';
  td.appendChild(button);
}

function buildCell(row, column) {
  const td = document.createElement("td");
  const value = cells[row] ? cells[row][column] : undefined;

  if (value !== undefined) td.textContent = value;
  if (typeof value === "number" || (column === "A" && row > 1)) {
    td.classList.add("num");
  }
  if (boldRows.includes(row)) td.classList.add("strong");

  // Pivot table area: B13:F18
  if (row >= 13 && row <= 18 && column >= "B" && column <= "F") {
    td.classList.add("pivot");
    if (boldRows.includes(row)) td.classList.add("head");
    if (row === 14 || row === 17) td.classList.add("rule");
  }
  if (filterCells.includes(column + row)) addFilter(td);
  return td;
}

const tbody = document.getElementById("rows");
for (let row = 1; row <= ROW_COUNT; row++) {
  const tr = document.createElement("tr");
  const th = document.createElement("th");
  th.textContent = row;
  tr.appendChild(th);
  COLUMNS.forEach((column) => tr.appendChild(buildCell(row, column)));
  tbody.appendChild(tr);
}
```
